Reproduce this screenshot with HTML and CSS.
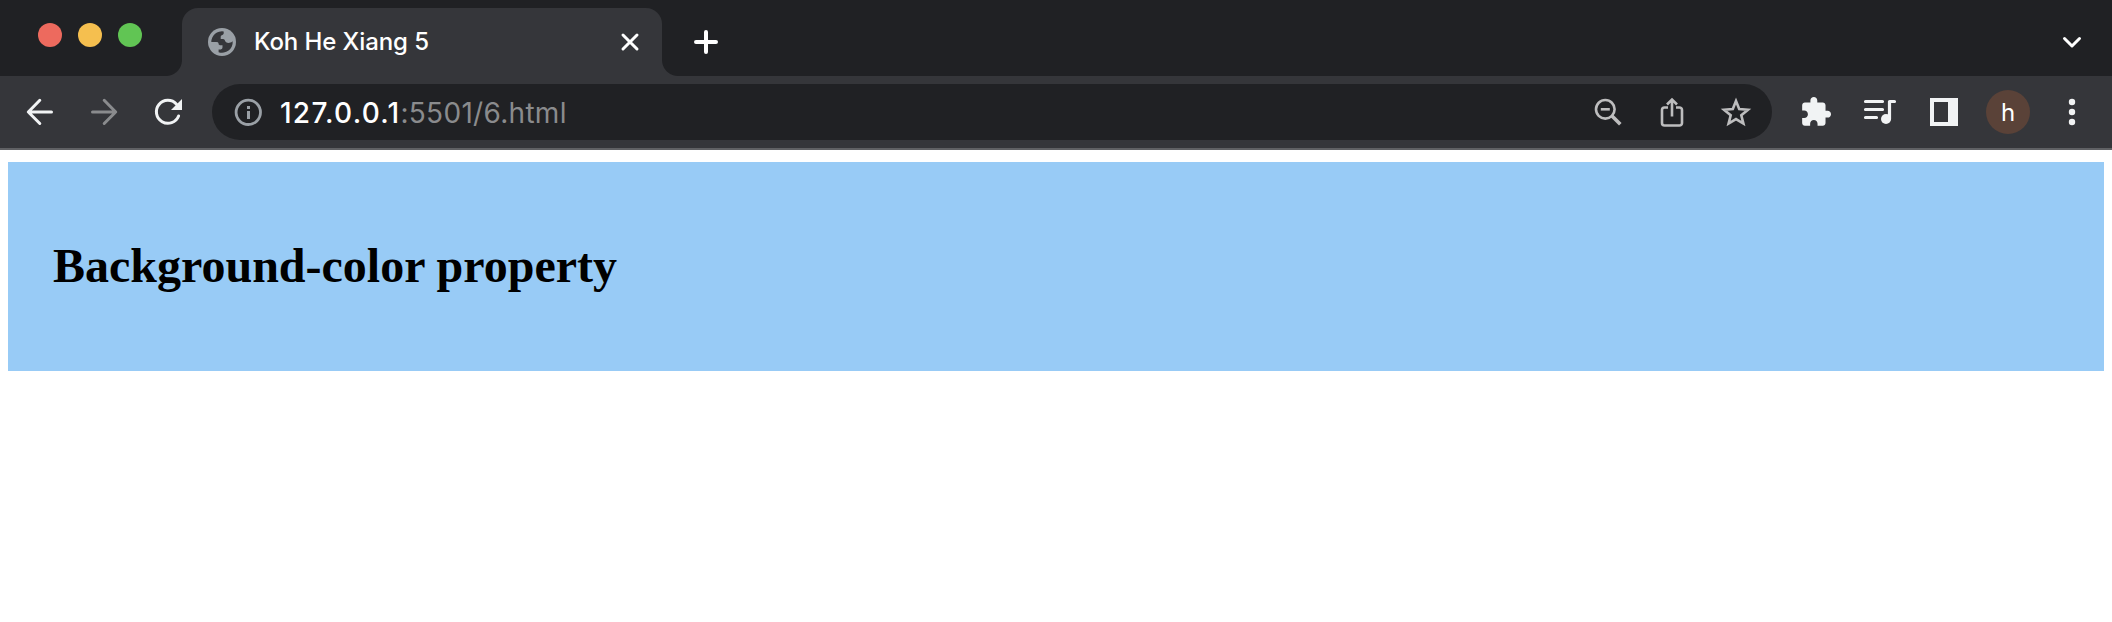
FILE: index.html
```
<!DOCTYPE html>
<html lang="en">
<head>
<meta charset="utf-8">
<title>Koh He Xiang 5</title>
<link rel="stylesheet" href="styles.css">
</head>
<body>
<header class="browser">
  <div class="tabstrip">
    <div class="lights"><i class="light red"></i><i class="light yellow"></i><i class="light green"></i></div>
    <div class="tab">
      <svg class="icon globe" viewBox="0 0 32 32"><circle cx="16" cy="16" r="14" fill="#9aa0a6"/><path fill="#35363a" d="M5.300 15.900A10.700 10.700 0 0 1 17.700 5.400V7.500Q17.500 8.800 15.800 9.200Q14.700 9.500 14.700 10.700V13H17.300Q19 13.300 19.200 15.300Q20.500 17.300 23.500 16.800Q25.600 16.500 26.700 15.300A10.700 10.700 0 0 1 12.600 26.200V23.400H14.800Q16.500 23.200 16.500 21.500V19.200H14Q12.200 19 12.500 17.300Q12.400 15.900 10.500 15.900Z"/></svg>
      <span class="title">Koh He Xiang 5</span>
      <svg class="icon" viewBox="0 0 32 32"><path class="line close" d="M9 9 23 23M23 9 9 23"/></svg>
    </div>
    <svg class="icon plus" viewBox="0 0 32 32"><path class="line thick" d="M16 6V26M6 16H26"/></svg>
    <svg class="icon chevron" viewBox="0 0 32 32"><path class="line close" d="m8.500 12.500 7.500 7.500 7.500-7.500"/></svg>
  </div>
  <div class="toolbar">
    <svg class="icon" viewBox="0 0 32 32"><path class="line" d="M27.500 16H4.500M15.800 4.300 4.300 16 15.800 27.500"/></svg>
    <svg class="icon dim" viewBox="0 0 32 32"><path class="line" d="M4.500 16H27.500M16.200 4.300 27.700 16 16.200 27.500"/></svg>
    <svg class="icon" viewBox="0 0 32 32"><path class="line" d="M26.600 20A11.500 11.500 0 1 1 24.500 8.200"/><path fill="#f1f3f4" d="M30 3V14H19Z"/></svg>
    <div class="omnibox">
      <svg class="icon" viewBox="0 0 32 32"><circle cx="16.300" cy="16.300" r="12.200" fill="none" stroke="#9aa0a6" stroke-width="2.800"/><path fill="#9aa0a6" d="M15 10h3v3h-3zM15 15h3v8h-3z"/></svg>
      <span class="url"><span class="host">127.0.0.1</span><span class="path">:5501/6.html</span></span>
      <div class="actions">
        <svg class="icon soft" viewBox="0 0 32 32"><circle cx="13.300" cy="13.300" r="9.300"/><path d="M8.800 13.300h9"/><path class="handle" d="m20 20 8.300 8.300"/></svg>
        <svg class="icon soft" viewBox="0 0 32 32"><path d="M12 11.500H8.500a2.500 2.500 0 0 0-2.500 2.500V27a2.500 2.500 0 0 0 2.500 2.500h15a2.500 2.500 0 0 0 2.500-2.500V14a2.500 2.500 0 0 0-2.500-2.500H20M16 20.500V4M11 8.500l5-5 5 5"/></svg>
        <svg class="icon soft" viewBox="0 0 32 32"><path d="m16 5 3.200 8 8.800.700-6.700 5.600 2.100 8.300L16 23.100l-7.400 4.500 2.100-8.300L4 13.700l8.800-.700Z"/></svg>
      </div>
    </div>
    <div class="extensions">
      <svg class="icon" viewBox="0 0 32 32"><path fill="#f1f3f4" transform="translate(-.6 -.4) scale(1.375)" d="M20.500 11H19V7c0-1.100-.9-2-2-2h-4V3.500C13 2.120 11.880 1 10.500 1S8 2.120 8 3.500V5H4c-1.100 0-1.990.9-1.990 2v3.800H3.500c1.490 0 2.700 1.210 2.700 2.700s-1.210 2.700-2.700 2.700H2V20c0 1.100.9 2 2 2h3.800v-1.500c0-1.490 1.210-2.700 2.700-2.700 1.490 0 2.700 1.210 2.700 2.700V22H17c1.100 0 2-.9 2-2v-4h1.500c1.380 0 2.500-1.120 2.500-2.500S21.880 11 20.500 11z"/></svg>
      <svg class="icon queue" viewBox="0 0 32 32"><path class="line" d="M1.500 5.500h17M1.500 13.500h17M1.500 21.500h11M25.500 23V5.500H30.500"/><circle cx="22" cy="23" r="5" fill="#f1f3f4"/></svg>
      <svg class="icon" viewBox="0 0 32 32"><path fill="#f1f3f4" fill-rule="evenodd" d="M2 2H30V30H2ZM6 6V26H20V6Z"/></svg>
      <span class="avatar">h</span>
      <svg class="icon" viewBox="0 0 32 32"><g fill="#f1f3f4"><circle cx="16" cy="6" r="3.200"/><circle cx="16" cy="16" r="3.200"/><circle cx="16" cy="26" r="3.200"/></g></svg>
    </div>
  </div>
</header>
<main class="page"><h1 class="heading">Background-color property</h1></main>
</body>
</html>
```
FILE: styles.css
```
body { margin: 0; background: #fff; font-family: Inter, "Liberation Sans", sans-serif; }
.browser { color: #fff; background: #35363a; border-bottom: 2px solid #606164; }
.icon { width: 32px; height: 32px; flex: none; display: block; overflow: visible; }
.line { fill: none; stroke: #f1f3f4; stroke-width: 3; stroke-linecap: round; stroke-linejoin: round; }
.queue .line { stroke-width: 3.2; }
.close { stroke: #fff; }
.thick { stroke: #fff; stroke-width: 4; }
.tabstrip { height: 76px; box-sizing: border-box; padding: 8px 24px 0 38px; display: flex; background: #202124; }
.lights { display: flex; gap: 16px; padding-top: 15px; width: 144px; }
.light { width: 24px; height: 24px; border-radius: 50%; }
.red { background: #ed6a5e; }
.yellow { background: #f5bf4f; }
.green { background: #61c554; }
.tab { position: relative; width: 480px; height: 68px; box-sizing: border-box; padding: 0 16px 0 24px; display: flex; align-items: center; background: #35363a; border-radius: 16px 16px 0 0; }
.tab::before, .tab::after { content: ""; position: absolute; bottom: 0; width: 16px; height: 16px; }
.tab::before { right: 100%; background: radial-gradient(circle at 0 0, #202124 15.5px, #35363a 16.5px); }
.tab::after { left: 100%; background: radial-gradient(circle at 100% 0, #202124 15.5px, #35363a 16.5px); }
.title { flex: 1; margin-left: 16px; font-size: 24px; font-weight: 450; letter-spacing: -0.1px; line-height: 32px; white-space: nowrap; }
.plus { margin: 18px 0 0 28px; }
.chevron { margin: 18px 0 0 auto; }
.toolbar { height: 72px; padding: 0 24px; display: flex; align-items: center; gap: 32px; }
.dim { opacity: .45; }
.omnibox { flex: 1; height: 56px; margin: 0 -4px; padding: 0 20px; box-sizing: border-box; display: flex; align-items: center; border-radius: 28px; background: #202124; }
.url { margin-left: 16px; padding-top: 1px; font-size: 28px; line-height: 36px; white-space: nowrap; }
.host { font-weight: 450; letter-spacing: 1.25px; }
.path { color: #8a8b8d; letter-spacing: .3px; }
.actions { margin-left: auto; display: flex; gap: 32px; }
.soft { fill: none; stroke: #bdbdbe; stroke-width: 2.6; }
.handle { stroke-width: 3.6; }
.extensions { display: flex; gap: 32px; align-items: center; }
.avatar { width: 44px; height: 44px; margin: 0 -6px; border-radius: 50%; background: #5a4238; font-size: 24px; line-height: 45px; text-align: center; }
.page { margin: 12px 8px 0; height: 209px; box-sizing: border-box; padding: 75px 45px 0; background: #98cbf6; }
.heading { margin: 0; color: #000; font: bold 48px/57px "Liberation Serif", serif; white-space: nowrap; }
```
